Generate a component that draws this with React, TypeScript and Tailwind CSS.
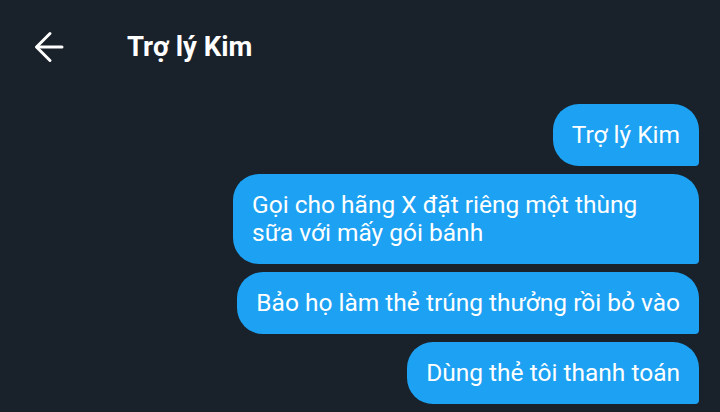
import React from "react";

const messages = [
  "Trợ lý Kim",
  "Gọi cho hãng X đặt riêng một thùng sữa với mấy gói bánh",
  "Bảo họ làm thẻ trúng thưởng rồi bỏ vào",
  "Dùng thẻ tôi thanh toán",
];

const BackArrow = () => (
  <svg width="30" height="32" viewBox="0 0 30 32" fill="none" stroke="white" strokeWidth="3" strokeLinecap="round" strokeLinejoin="round">
    <path d="M28 16H3" />
    <path d="M16 2.5 2.5 16 16 29.5" />
  </svg>
);

export default function App() {
  return (
    <div className="w-[720px] h-[412px] overflow-hidden bg-[#19212a] text-white font-['Roboto',sans-serif]">
      <div className="h-[94px] flex items-center">
        <div className="pl-[34px] w-[127px] flex items-center">
          <BackArrow />
        </div>
        <h1 className="text-[27.5px] font-bold leading-none">Trợ lý Kim</h1>
      </div>
      <div className="flex flex-col items-end gap-2 pt-[10px] pr-[21px]">
        {messages.map((m, i) => (
          <div
            key={i}
            className="max-w-[466px] bg-[#1da1f2] rounded-[26px] rounded-br-[4px] px-[19px] py-[17px] text-[24.5px] leading-[28px]"
          >
            {m}
          </div>
        ))}
      </div>
    </div>
  );
}
